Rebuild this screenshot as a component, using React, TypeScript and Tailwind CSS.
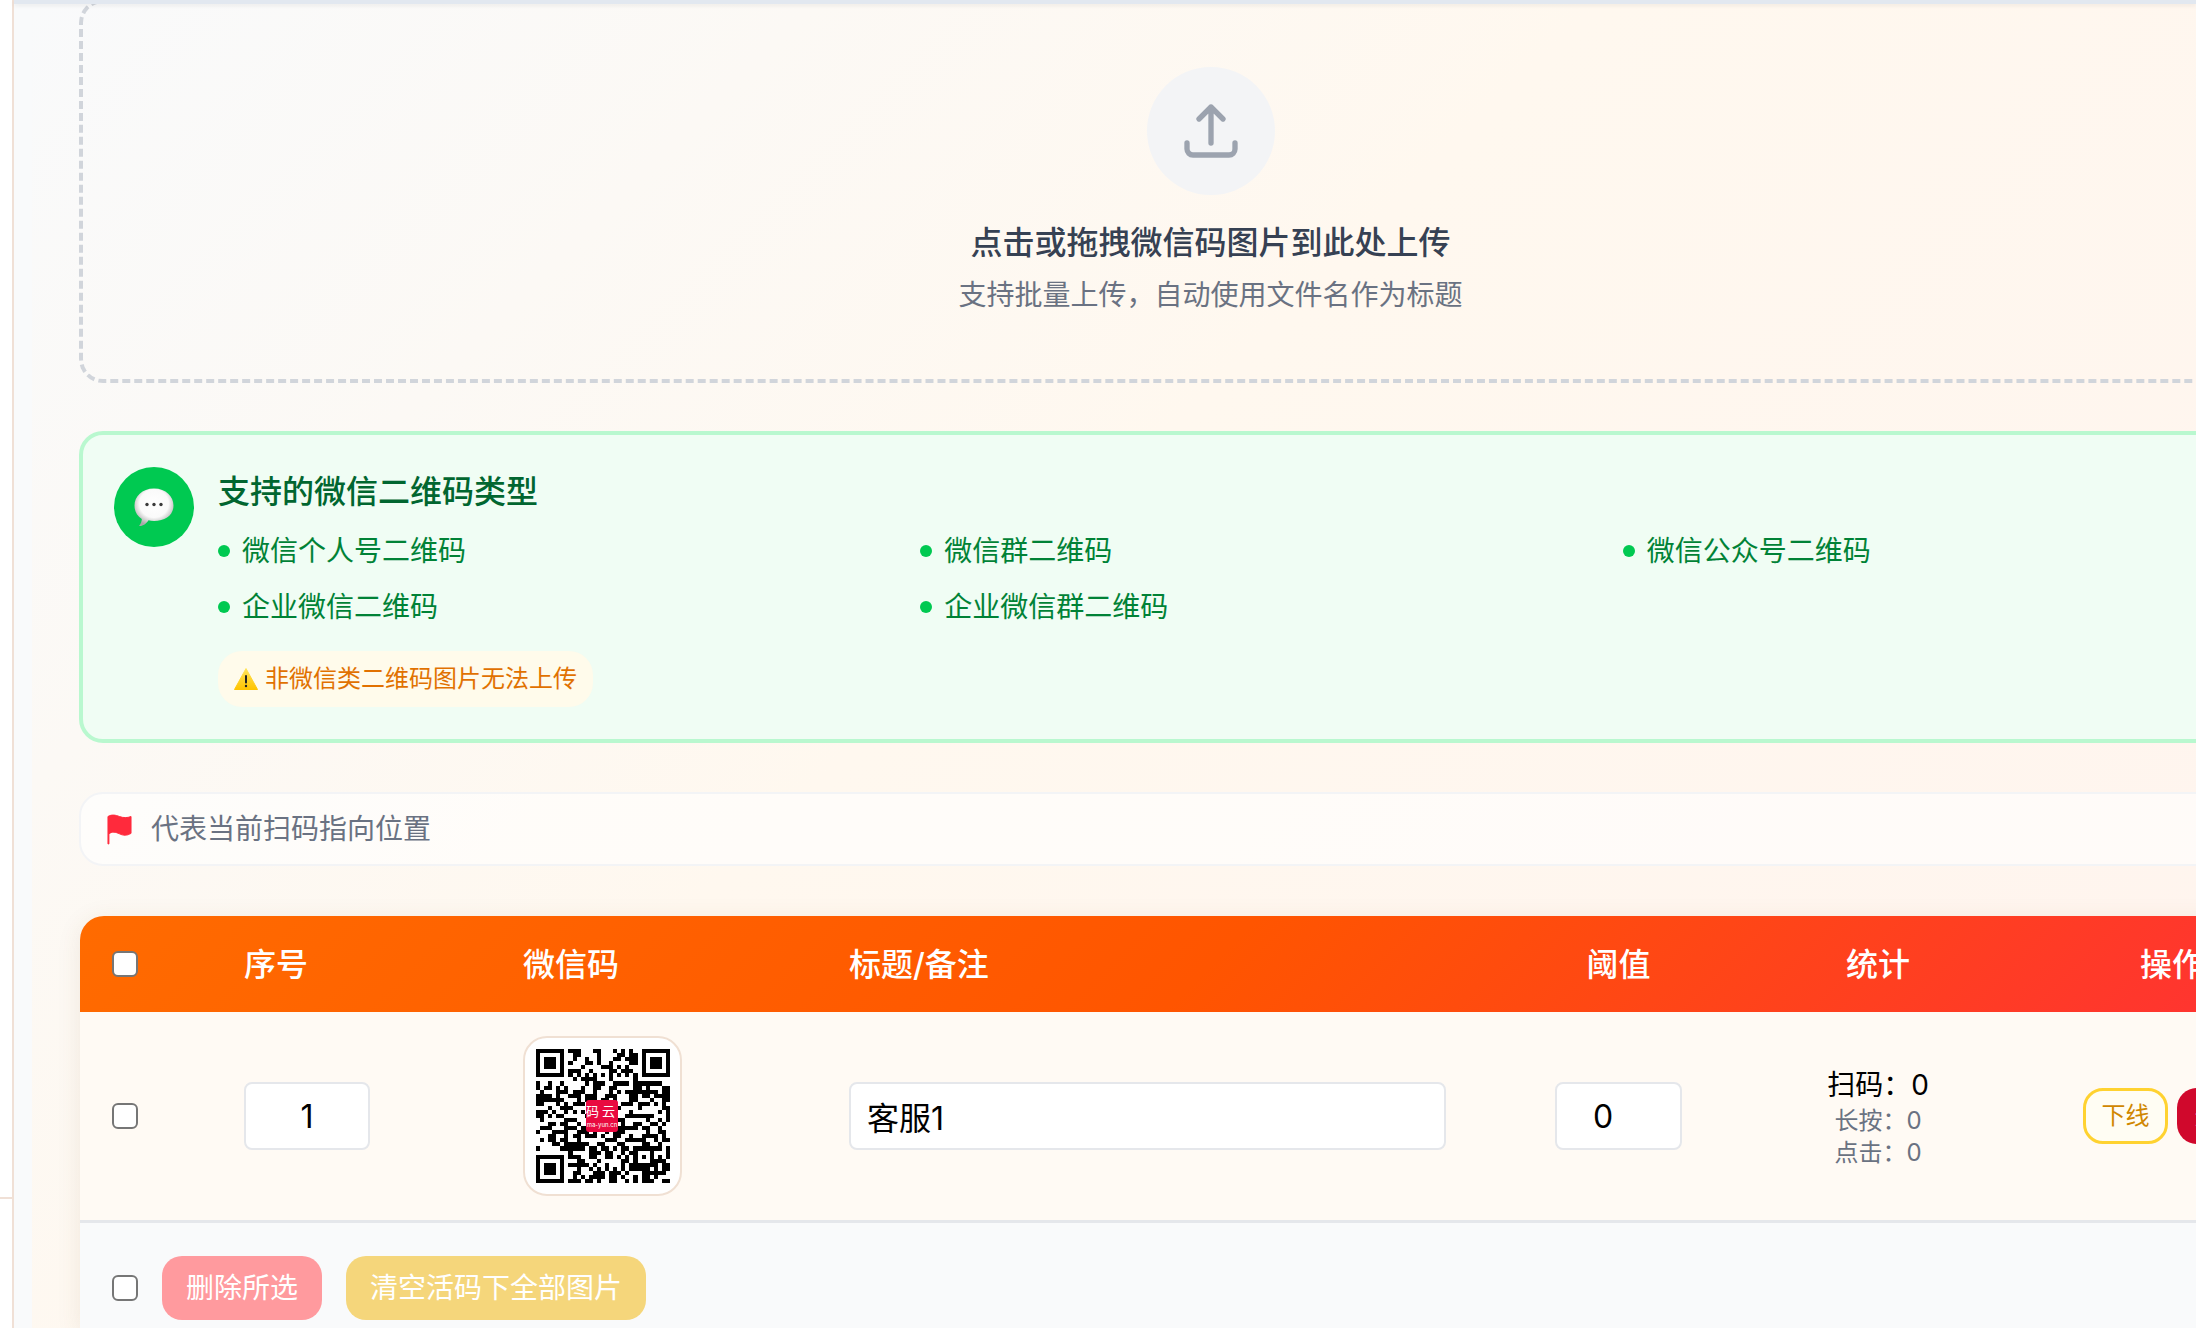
// 活码图片管理页：上传区、支持类型说明、图片列表
import { useMemo } from 'react'

const FONT = { fontFamily: 'Inter, "Noto Sans CJK SC", sans-serif' }
const COLS = 'grid grid-cols-[132px_279px_326px_661px_281px_238px_350px]'

const TYPES = ['微信个人号二维码', '微信群二维码', '微信公众号二维码', '企业微信二维码', '企业微信群二维码']

function Checkbox() {
  return <input type="checkbox" className="h-[26px] w-[26px] shrink-0 appearance-none rounded-[6px] border-2 border-[#767676] bg-white" />
}

function UploadIcon() {
  return (
    <svg viewBox="0 0 24 24" className="h-16 w-16" fill="none" stroke="#9ca3af" strokeWidth="2" strokeLinecap="round" strokeLinejoin="round">
      <path d="M3 16.500v2.250A2.250 2.250 0 0 0 5.250 21h13.500A2.250 2.250 0 0 0 21 18.750V16.500m-13.500-9L12 3m0 0 4.500 4.500M12 3v13.500" />
    </svg>
  )
}

function BubbleIcon() {
  return (
    <svg viewBox="0 0 40 40" className="h-[40px] w-[40px]">
      <defs>
        <radialGradient id="bubble" cx="50%" cy="40%" r="60%">
          <stop offset="0%" stopColor="#ffffff" />
          <stop offset="62%" stopColor="#fafafa" />
          <stop offset="100%" stopColor="#a8a8a8" />
        </radialGradient>
      </defs>
      <path d="M5 39C7 36.500 7.800 34 7.800 32 3 29 .5 24.500 .5 18.500 .5 9.500 8 1.500 20 1.500s19.500 8 19.500 17c0 9.500-8 15.500-19.500 15.500-2.200 0-4-.2-5.500-.7C12.300 37 8.500 39.500 5 39Z" fill="url(#bubble)" />
      <circle cx="13" cy="17.500" r="1.700" fill="#3a3a3a" />
      <circle cx="20" cy="17.500" r="1.700" fill="#3a3a3a" />
      <circle cx="27" cy="17.500" r="1.700" fill="#3a3a3a" />
    </svg>
  )
}

function WarnIcon() {
  return (
    <svg viewBox="0 0 24 24" className="h-[24px] w-[24px] shrink-0">
      <defs>
        <linearGradient id="warn" x1="0" y1="0" x2="0" y2="1">
          <stop offset="0%" stopColor="#ffe45c" />
          <stop offset="100%" stopColor="#ffc400" />
        </linearGradient>
      </defs>
      <path d="M12 1.500 23.500 22.500H.5Z" fill="url(#warn)" stroke="url(#warn)" strokeWidth="1" strokeLinejoin="round" />
      <rect x="11" y="8" width="2" height="8.500" rx="1" fill="#222" />
      <circle cx="12" cy="19" r="1.200" fill="#222" />
    </svg>
  )
}

function FlagIcon() {
  return (
    <svg viewBox="0 0 26 32" className="h-[31px] w-[25px] shrink-0">
      <path d="M1 2.500C5 0 9 1 13 2.500s8 1.500 12 0V20c-4 2.500-8 2.500-12 .500s-8-2.500-11 0V31H1Z" fill="#ff2a3c" stroke="#ff2a3c" strokeWidth="1" strokeLinejoin="round" />
    </svg>
  )
}

// 二维码：33 模块，定位点 + 定时线 + 校正点，其余用固定种子填充
function QrCode() {
  const cells = useMemo(() => {
    const n = 33
    const out: [number, number][] = []
    let s = 0x2f6e2b1
    const next = () => {
      s ^= s << 13
      s ^= s >>> 17
      s ^= s << 5
      return (s >>> 0) % 100 < 50
    }
    const finder = (x: number, y: number, ox: number, oy: number) => {
      const dx = x - ox
      const dy = y - oy
      if (dx < -1 || dy < -1 || dx > 7 || dy > 7) return null
      if (dx < 0 || dy < 0 || dx > 6 || dy > 6) return false
      return dx === 0 || dy === 0 || dx === 6 || dy === 6 || (dx >= 2 && dx <= 4 && dy >= 2 && dy <= 4)
    }
    for (let y = 0; y < n; y++) {
      for (let x = 0; x < n; x++) {
        const r = next()
        const f = finder(x, y, 0, 0) ?? finder(x, y, 26, 0) ?? finder(x, y, 0, 26)
        let on = f ?? r
        if (f === null && Math.abs(x - 26) <= 2 && Math.abs(y - 26) <= 2) {
          on = Math.max(Math.abs(x - 26), Math.abs(y - 26)) !== 1
        } else if (f === null && y === 6) on = x % 2 === 0
        else if (f === null && x === 6) on = y % 2 === 0
        if (on) out.push([x, y])
      }
    }
    return out
  }, [])
  return (
    <svg viewBox="0 0 33 33" className="h-[134px] w-[134px]" shapeRendering="crispEdges">
      {cells.map(([x, y]) => (
        <rect key={`${x}-${y}`} x={x} y={y} width="1" height="1" fill="#000" />
      ))}
    </svg>
  )
}

function QrCard() {
  return (
    <div className="relative flex h-[160px] w-[159px] items-center justify-center rounded-[24px] border-2 border-[#f0e0d3] bg-white">
      <QrCode />
      <div className="absolute left-[61px] top-[62px] flex h-[32px] w-[32px] flex-col items-center overflow-hidden rounded-[3px] bg-[#e90a40] text-white">
        <span className="whitespace-nowrap text-[13px] leading-[21px] tracking-[3px]" style={{ fontFamily: '"Noto Sans CJK JP", serif' }}>码云</span>
        <span className="whitespace-nowrap text-[6px] leading-[7px]">ma-yun.cn</span>
      </div>
    </div>
  )
}

export default function App() {
  return (
    <div className="relative flex h-[1328px] w-[2196px] overflow-hidden bg-white" style={FONT}>
      <div className="flex w-[14px] shrink-0 flex-col border-r-2 border-[#f0e0d6]">
        <div className="h-[1199px] border-b-2 border-[#f0e0d6]" />
      </div>

      <div className="w-[18px] shrink-0 bg-[#f9fafb]" />

      <div className="min-w-0 flex-1 bg-[linear-gradient(135deg,#f9fafb_0%,#fff8ef_45%,#fff4ee_100%)] pl-12">
        <div className="flex w-[2262px] flex-col">
          <div className="-ml-px -mt-px flex h-[384px] flex-col items-center rounded-[24px] border-4 border-dashed border-[#d1d5db] pt-[64px]">
            <div className="flex h-[128px] w-[128px] items-center justify-center rounded-full bg-gray-100">
              <UploadIcon />
            </div>
            <p className="mt-6 text-[32px] font-medium leading-[48px] text-gray-700">点击或拖拽微信码图片到此处上传</p>
            <p className="mt-2 text-[28px] leading-[40px] text-gray-500">支持批量上传，自动使用文件名作为标题</p>
          </div>

          <div className="-ml-px mt-12 flex h-[312px] gap-6 rounded-[24px] border-4 border-green-200 bg-green-50 pl-[31px] pr-[29px] pt-8">
            <div className="flex h-[80px] w-[80px] shrink-0 items-center justify-center rounded-full bg-green-500">
              <BubbleIcon />
            </div>
            <div className="flex-1">
              <h3 className="pt-px text-[32px] font-medium leading-[48px] text-green-800">支持的微信二维码类型</h3>
              <div className="mt-[15px] grid grid-cols-3 gap-4">
                {TYPES.map((t) => (
                  <div key={t} className="flex items-center gap-3 text-[28px] leading-[40px] text-green-700">
                    <span className="h-[12px] w-[12px] rounded-full bg-green-500" />
                    {t}
                  </div>
                ))}
              </div>
              <div className="mt-6 inline-flex items-center gap-[7px] rounded-[24px] bg-amber-50 px-4 py-3 text-[24px] leading-[32px] text-amber-600">
                <WarnIcon />
                非微信类二维码图片无法上传
              </div>
            </div>
          </div>

          <div className="-ml-px mt-[49px] flex h-[74px] items-center gap-[19px] rounded-[24px] border-2 border-gray-100 bg-white/60 pl-[26px]">
            <FlagIcon />
            <span className="text-[28px] leading-[40px] text-gray-500">代表当前扫码指向位置</span>
          </div>

          <div className="mt-[50px] overflow-hidden rounded-t-[24px] shadow-[0_4px_24px_rgba(120,80,40,0.1)]">
            <div className={`${COLS} h-[96px] items-center bg-[linear-gradient(135deg,#ff6b00,#ff5500_50%,#ff3036)] text-[32px] font-medium leading-[48px] text-white`}>
              <div className="flex pl-8"><Checkbox /></div>
              <div className="pl-8 pt-px">序号</div>
              <div className="pl-8 pt-px">微信码</div>
              <div className="pl-8 pt-px">标题/备注</div>
              <div className="pt-px text-center">阈值</div>
              <div className="pt-px text-center">统计</div>
              <div className="pt-px text-center">操作</div>
            </div>

            <div className={`${COLS} h-[208px] items-center bg-[#fffaf4]`}>
              <div className="flex pl-8"><Checkbox /></div>
              <div className="flex pl-8">
                <input readOnly value="1" className="h-[68px] w-[126px] rounded-[8px] border-2 border-gray-200 bg-white text-center text-[32px] text-black" />
              </div>
              <div className="flex pl-8"><QrCard /></div>
              <div className="flex pl-8">
                <input readOnly value="客服1" className="h-[68px] w-[597px] rounded-[8px] border-2 border-gray-200 bg-white px-4 text-[32px] text-black" />
              </div>
              <div className="flex justify-center">
                <input readOnly value="0" className="h-[68px] w-[127px] rounded-[8px] border-2 border-gray-200 bg-white pl-[36px] text-[32px] text-black" />
              </div>
              <div className="pt-[2px] text-center">
                <div className="text-[28px] leading-[40px] text-black">扫码：0</div>
                <div className="text-[24px] leading-[32px] text-gray-500">长按：0</div>
                <div className="text-[24px] leading-[32px] text-gray-500">点击：0</div>
              </div>
              <div className="flex justify-center gap-[9px]">
                <button className="h-[56px] w-[85px] rounded-[20px] border-[3px] border-[#ffd230] bg-[#fffdf3] text-[24px] text-[#d08700]">下线</button>
                <button className="h-[56px] w-[84px] rounded-[20px] bg-[#d0082c] text-[24px] text-white">删除</button>
              </div>
            </div>

            <div className="flex h-[110px] items-start gap-6 border-t-[3px] border-gray-200 bg-gray-50 pl-8 pt-[33px]">
              <div className="flex h-[64px] items-center"><Checkbox /></div>
              <button className="h-[64px] w-[160px] rounded-[20px] bg-[#ff9a9e] text-[28px] text-white">删除所选</button>
              <button className="h-[64px] w-[300px] rounded-[20px] bg-[#f5d67b] text-[28px] text-white">清空活码下全部图片</button>
            </div>
          </div>
        </div>
      </div>

      <div className="absolute left-[14px] right-0 top-0 h-[4px] bg-[#e2e8f0] shadow-[0_2px_4px_rgba(0,0,0,0.06)]" />
    </div>
  )
}
